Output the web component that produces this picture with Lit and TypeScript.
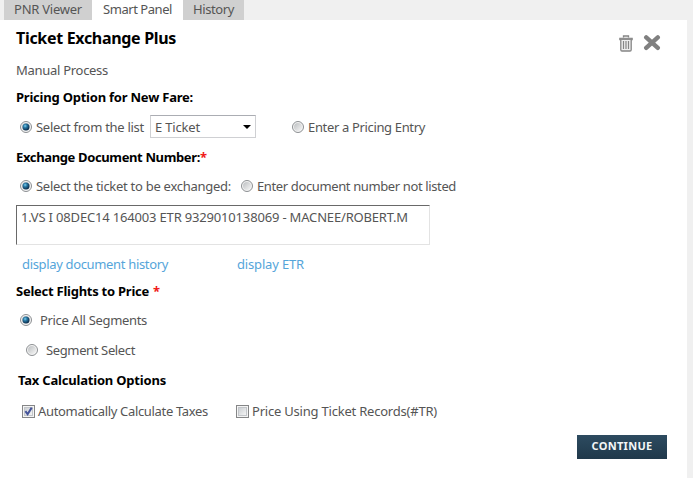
import { LitElement, html, css, svg } from "lit";
import { customElement, property } from "lit/decorators.js";

/** A run of text whose tracking is adjusted to fill a given width. */
@customElement("text-run")
class TextRun extends LitElement {
  @property({ type: Number }) fit = 0;
  static styles = css`
    :host { display: block; flex: none; white-space: pre; }
    .run { display: inline-block; }
  `;
  render() {
    return html`<span class="run">${this.textContent}</span>`;
  }
  updated() {
    const run = this.renderRoot.querySelector(".run") as HTMLElement;
    run.style.letterSpacing = "0px";
    const natural = run.getBoundingClientRect().width;
    const count = (this.textContent || "").length;
    if (this.fit && count) run.style.letterSpacing = `${(this.fit - natural) / count}px`;
  }
}

@customElement("radio-dot")
class RadioDot extends LitElement {
  @property({ type: Boolean }) on = false;
  static styles = css`
    :host { display: block; flex: none; width: 12px; height: 12px; }
    svg { display: block; }
  `;
  render() {
    return html`<svg width="12" height="12" viewBox="0 0 12 12">
      <defs>
        <linearGradient id="g" x1="0" y1="0" x2="1" y2="1"><stop offset="0" stop-color="#bcbfc1"/><stop offset="1" stop-color="#f6f6f6"/></linearGradient>
        <radialGradient id="b" cx=".38" cy=".35" r=".65"><stop offset="0" stop-color="#7fd0ee"/><stop offset=".4" stop-color="#2777a3"/><stop offset="1" stop-color="#0b2b49"/></radialGradient>
      </defs>
      <circle cx="6" cy="6" r="5.5" fill="#f4f4f4" stroke="#8c8f92"/>
      <circle cx="6" cy="6" r="4" fill="url(#g)"/>
      ${this.on ? svg`<circle cx="6" cy="6" r="3.5" fill="url(#b)"/>` : ""}
    </svg>`;
  }
}

@customElement("check-square")
class CheckSquare extends LitElement {
  @property({ type: Boolean }) on = false;
  static styles = css`
    :host { display: block; flex: none; width: 13px; height: 13px; }
    svg { display: block; }
  `;
  render() {
    return html`<svg width="13" height="13" viewBox="0 0 13 13">
      <defs><linearGradient id="g" x1="0" y1="0" x2="1" y2="1"><stop offset="0" stop-color="#c9cdd1"/><stop offset="1" stop-color="#f7f7f7"/></linearGradient></defs>
      <rect x=".5" y=".5" width="12" height="12" fill="#f4f4f4" stroke="#858687"/>
      <rect x="2.5" y="2.5" width="8" height="8" fill="url(#g)" stroke="#c3c6ca"/>
      ${this.on ? svg`<path d="M3.4 6.2L5.6 9.2L9.7 2.6" fill="none" stroke="#45549a" stroke-width="2"/>` : ""}
    </svg>`;
  }
}

@customElement("app-root")
class AppRoot extends LitElement {
  static styles = css`
    :host {
      display: block; height: 478px; overflow: hidden; background: #f0f0f0;
      font: 13px/18px "Noto Sans", "Open Sans", sans-serif; color: #555;
    }
    .tabs { display: flex; height: 20px; padding-left: 4px; }
    .tab { display: flex; height: 20px; box-sizing: border-box; padding: 0 10px; background: #d0d0d0; }
    .tab.viewer { width: 88px; }
    .tab.active { width: 91px; padding-left: 11px; background: #fff; }
    .tab.history { width: 61px; }
    .panel { width: 687px; height: 458px; background: #fff; }
    .row { display: flex; align-items: center; box-sizing: border-box; padding-left: 16px; }
    .strong { font-weight: 700; color: #000; }
    .title { height: 37px; font-size: 16px; }
    .title text-run { flex: 1; padding-bottom: 2px; }
    .icons { display: flex; gap: 10px; padding: 9px 26px 0 0; }
    .manual { height: 26px; }
    .pricing { height: 29px; padding-bottom: 2px; }
    .fare { height: 30px; padding: 0 0 1px 20px; }
    .doc { height: 30px; }
    .ticket { height: 28px; padding-left: 20px; }
    .gap4 { margin-left: 4px; }
    .gap8 { margin-left: 8px; }
    .gap10 { margin-left: 10px; }
    .far { margin-left: 36px; }
    .star { color: #f01818; }
    .spaced { margin-left: 4px; }
    .select {
      display: flex; align-items: center; justify-content: space-between; box-sizing: border-box;
      width: 106px; height: 23px; margin-left: 6px; padding: 0 4px;
      border: 1px solid #cfd0d3; border-top-color: #abadb3;
    }
    .list {
      box-sizing: border-box; width: 414px; height: 40px; margin: 5px 0 5px 16px; padding: 2px 4px;
      border: 1px solid #e3e3e3; border-top-color: #696969; border-left-color: #696969;
    }
    .links { height: 29px; padding: 0 0 1px 22px; color: #55a5da; }
    .links .second { margin-left: 69px; }
    .flights { height: 26px; padding-bottom: 2px; }
    .all { height: 30px; padding-left: 20px; }
    .segment { height: 30px; padding-left: 26px; }
    .tax { height: 30px; padding-left: 18px; }
    .checks { height: 32px; padding-left: 22px; }
    .check-gap { margin-left: 3px; }
    .next { margin-left: 28px; }
    .actions { display: flex; justify-content: flex-end; padding: 8px 20px 0 0; }
    .button {
      display: flex; align-items: center; justify-content: center; box-sizing: border-box;
      width: 90px; height: 24px; border: 0; padding: 0 0 2px;
      background: linear-gradient(#2d4b60, #20394b); color: #f3f6f8;
      font: 700 11px/16px "Noto Sans", sans-serif;
    }
  `;

  render() {
    return html`
      <div class="tabs">
        <div class="tab viewer"><text-run fit="68">PNR Viewer</text-run></div>
        <div class="tab active"><text-run fit="69">Smart Panel</text-run></div>
        <div class="tab history"><text-run fit="41">History</text-run></div>
      </div>
      <div class="panel">
        <div class="row title strong">
          <text-run fit="160">Ticket Exchange Plus</text-run>
          <div class="icons">
            <svg width="14" height="17" viewBox="0 0 14 17" fill="none" stroke="#858585">
              <path d="M4.5 2.5V1H9.5V2.5" stroke-width="1.3"/>
              <path d="M.8 4.8V3.2H13.2V4.8Z" fill="#999" stroke-width="1.1"/>
              <path d="M1.8 5V14.8Q1.8 16 3 16H11Q12.2 16 12.2 14.8V5" fill="#eee" stroke-width="1.3"/>
              <path d="M4.5 6V14M7 6V14M9.5 6V14" stroke-width="1.2"/>
            </svg>
            <svg width="18" height="16" viewBox="0 0 18 16" stroke="#808080" stroke-width="4.4" stroke-linecap="round">
              <path d="M3.2 2.4L14.8 12.8M14.8 2.4L3.2 12.8"/>
            </svg>
          </div>
        </div>
        <div class="row manual"><text-run fit="92">Manual Process</text-run></div>
        <div class="row pricing strong"><text-run fit="177">Pricing Option for New Fare:</text-run></div>
        <div class="row fare">
          <radio-dot on></radio-dot><text-run class="gap4" fit="108">Select from the list</text-run>
          <div class="select"><text-run fit="45">E Ticket</text-run>
            <svg width="8" height="4" viewBox="0 0 8 4"><path d="M0 0H8L4 4Z" fill="#000"/></svg>
          </div>
          <radio-dot class="far"></radio-dot><text-run class="gap4" fit="117">Enter a Pricing Entry</text-run>
        </div>
        <div class="row doc strong"><text-run fit="184">Exchange Document Number:</text-run><text-run class="star" fit="6">*</text-run></div>
        <div class="row ticket">
          <radio-dot on></radio-dot><text-run class="gap4" fit="195">Select the ticket to be exchanged:</text-run>
          <radio-dot class="gap10"></radio-dot><text-run class="gap4" fit="199">Enter document number not listed</text-run>
        </div>
        <div class="list"><text-run fit="387">1.VS I 08DEC14 164003 ETR 9329010138069 - MACNEE/ROBERT.M</text-run></div>
        <div class="row links">
          <text-run fit="146">display document history</text-run><text-run class="second" fit="67">display ETR</text-run>
        </div>
        <div class="row flights strong"><text-run fit="133">Select Flights to Price</text-run><text-run class="star spaced" fit="6">*</text-run></div>
        <div class="row all"><radio-dot on></radio-dot><text-run class="gap8" fit="107">Price All Segments</text-run></div>
        <div class="row segment"><radio-dot></radio-dot><text-run class="gap8" fit="89">Segment Select</text-run></div>
        <div class="row tax strong"><text-run fit="148">Tax Calculation Options</text-run></div>
        <div class="row checks">
          <check-square on></check-square><text-run class="check-gap" fit="170">Automatically Calculate Taxes</text-run>
          <check-square class="next"></check-square><text-run class="check-gap" fit="185">Price Using Ticket Records(#TR)</text-run>
        </div>
        <div class="actions"><button class="button"><text-run fit="61">CONTINUE</text-run></button></div>
      </div>
    `;
  }
}
